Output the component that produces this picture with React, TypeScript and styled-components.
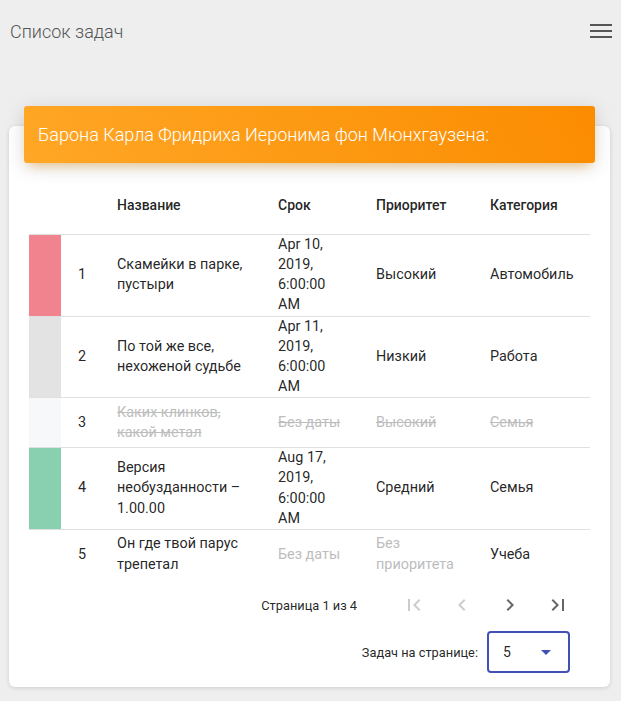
import styled, { createGlobalStyle } from "styled-components";

const GlobalStyle = createGlobalStyle`
  body {
    margin: 0;
    background: #eeeeee;
    font-family: Roboto, "Noto Sans", sans-serif;
    color: rgba(0, 0, 0, 0.87);
  }
`;

type Task = {
  id: number;
  name: string;
  date: string | null;
  priority: string | null;
  category: string;
  color: string;
  done?: boolean;
};

const tasks: Task[] = [
  { id: 1, name: "Скамейки в парке, пустыри", date: "Apr 10, 2019, 6:00:00 AM", priority: "Высокий", category: "Автомобиль", color: "#f0838d" },
  { id: 2, name: "По той же все, нехоженой судьбе", date: "Apr 11, 2019, 6:00:00 AM", priority: "Низкий", category: "Работа", color: "#e3e3e3" },
  { id: 3, name: "Каких клинков, какой метал", date: null, priority: "Высокий", category: "Семья", color: "#f7f8fa", done: true },
  { id: 4, name: "Версия необузданности – 1.00.00", date: "Aug 17, 2019, 6:00:00 AM", priority: "Средний", category: "Семья", color: "#88d0b0" },
  { id: 5, name: "Он где твой парус трепетал", date: null, priority: null, category: "Учеба", color: "transparent" },
];

// column widths and right padding, in px
const cols = [
  { w: 32, pr: 0 },
  { w: 56, pr: 0 },
  { w: 161, pr: 25 },
  { w: 98, pr: 30 },
  { w: 114, pr: 24 },
  { w: 100, pr: 0 },
];

const MenuIcon = () => (
  <svg width="22" height="14" viewBox="0 0 22 14">
    <path d="M0 0h22v2H0zM0 6h22v2H0zM0 12h22v2H0z" fill="#555" />
  </svg>
);

const FirstPage = () => (
  <svg width="24" height="24" viewBox="0 0 24 24">
    <path d="M18.41 16.59L13.82 12l4.59-4.59L17 6l-6 6 6 6zM6 6h2v12H6z" fill="currentColor" />
  </svg>
);
const PrevPage = () => (
  <svg width="24" height="24" viewBox="0 0 24 24">
    <path d="M15.41 16.59L10.83 12l4.58-4.59L14 6l-6 6 6 6 1.41-1.41z" fill="currentColor" />
  </svg>
);
const NextPage = () => (
  <svg width="24" height="24" viewBox="0 0 24 24">
    <path d="M8.59 16.59L13.17 12 8.59 7.41 10 6l6 6-6 6-1.41-1.41z" fill="currentColor" />
  </svg>
);
const LastPage = () => (
  <svg width="24" height="24" viewBox="0 0 24 24">
    <path d="M5.59 7.41L10.18 12l-4.59 4.59L7 18l6-6-6-6zM16 6h2v12h-2z" fill="currentColor" />
  </svg>
);

export default function App() {
  return (
    <>
      <GlobalStyle />
      <TopBar>
        <AppTitle>Список задач</AppTitle>
        <MenuButton>
          <MenuIcon />
        </MenuButton>
      </TopBar>
      <Card>
        <CardHeader>
          <CardTitle>Барона Карла Фридриха Иеронима фон Мюнхгаузена:</CardTitle>
        </CardHeader>
        <CardBody>
          <Table>
            <colgroup>
              {cols.map((c, i) => (
                <col key={i} style={{ width: c.w }} />
              ))}
            </colgroup>
            <thead>
              <tr>
                <HeadCell />
                <HeadCell />
                <HeadCell>Название</HeadCell>
                <HeadCell>Срок</HeadCell>
                <HeadCell>Приоритет</HeadCell>
                <HeadCell>Категория</HeadCell>
              </tr>
            </thead>
            <tbody>
              {tasks.map((t, i) => (
                <Row key={t.id} $last={i === tasks.length - 1}>
                  <Stripe $color={t.color} />
                  <NumCell>{t.id}</NumCell>
                  <Cell $pr={cols[2].pr} $done={t.done}>{t.name}</Cell>
                  <Cell $pr={cols[3].pr} $done={t.done} $muted={!t.date}>
                    {t.date ?? "Без даты"}
                  </Cell>
                  <Cell $pr={cols[4].pr} $done={t.done} $muted={!t.priority}>
                    {t.priority ?? "Без приоритета"}
                  </Cell>
                  <Cell $pr={cols[5].pr} $done={t.done}>{t.category}</Cell>
                </Row>
              ))}
            </tbody>
          </Table>
          <Pagination>
            <PageInfo>Страница 1 из 4</PageInfo>
            <Pager>
              <IconButton $disabled><FirstPage /></IconButton>
              <IconButton $disabled><PrevPage /></IconButton>
              <IconButton><NextPage /></IconButton>
              <IconButton><LastPage /></IconButton>
            </Pager>
          </Pagination>
          <PerPage>
            <PerPageLabel>Задач на странице:</PerPageLabel>
            <Select>
              <span>5</span>
              <svg width="24" height="24" viewBox="0 0 24 24">
                <path d="M7 10l5 5 5-5z" fill="#3f51b5" />
              </svg>
            </Select>
          </PerPage>
        </CardBody>
      </Card>
    </>
  );
}

const TopBar = styled.header`
  display: flex;
  align-items: center;
  justify-content: space-between;
  height: 62px;
  padding: 0 9px 0 10px;
`;

const AppTitle = styled.div`
  font-size: 18px;
  font-weight: 300;
  color: #555;
`;

const MenuButton = styled.div`
  display: flex;
  margin-top: -1px;
`;

const Card = styled.div`
  margin: 64px 11px 13px 9px;
  background: #fff;
  border-radius: 6px;
  box-shadow: 0 1px 4px 0 rgba(0, 0, 0, 0.14);
`;

const CardHeader = styled.div`
  position: relative;
  top: -20px;
  margin: 0 15px -20px;
  padding: 15px 14px;
  border-radius: 3px;
  background: linear-gradient(60deg, #ffa726, #fb8c00);
  box-shadow: 0 4px 20px 0 rgba(0, 0, 0, 0.14),
    0 7px 10px -5px rgba(255, 152, 0, 0.4);
`;

const CardTitle = styled.h4`
  margin: 0;
  font-size: 18px;
  line-height: 27px;
  font-weight: 300;
  color: #fff;
`;

const CardBody = styled.div`
  padding: 15px 20px 14px;
`;

const Table = styled.table`
  width: 561px;
  table-layout: fixed;
  border-collapse: collapse;
  font-size: 14.4px;
  line-height: 1.4;
`;

const HeadCell = styled.th`
  height: 56px;
  padding: 0;
  text-align: left;
  font-size: 14px;
  font-weight: 500;
  color: rgba(0, 0, 0, 0.87);
  border-bottom: 1px solid #e0e0e0;
`;

const Row = styled.tr<{ $last?: boolean }>`
  height: 50px;
  border-bottom: ${(p) => (p.$last ? "none" : "1px solid #e0e0e0")};
`;

const Stripe = styled.td<{ $color: string }>`
  padding: 0;
  background: ${(p) => p.$color};
`;

const NumCell = styled.td`
  padding: 0 0 0 17px;
  vertical-align: middle;
`;

const Cell = styled.td<{ $pr: number; $done?: boolean; $muted?: boolean }>`
  padding: 0 ${(p) => p.$pr}px 0 0;
  vertical-align: middle;
  color: ${(p) => (p.$done || p.$muted ? "#bdbdbd" : "rgba(0, 0, 0, 0.87)")};
  text-decoration: ${(p) => (p.$done ? "line-through" : "none")};
`;

const Pagination = styled.div`
  display: flex;
  align-items: center;
  justify-content: flex-end;
  height: 52px;
  padding-right: 8px;
`;

const PageInfo = styled.div`
  margin-right: 33px;
  font-size: 12.8px;
  color: rgba(0, 0, 0, 0.87);
`;

const Pager = styled.div`
  display: flex;
`;

const IconButton = styled.div<{ $disabled?: boolean }>`
  display: flex;
  align-items: center;
  justify-content: center;
  width: 48px;
  height: 48px;
  color: ${(p) => (p.$disabled ? "rgba(0, 0, 0, 0.2)" : "rgba(0, 0, 0, 0.6)")};
`;

const PerPage = styled.div`
  display: flex;
  align-items: center;
  justify-content: flex-end;
  gap: 9px;
  padding-right: 20px;
`;

const PerPageLabel = styled.div`
  font-size: 12.8px;
  color: rgba(0, 0, 0, 0.87);
`;

const Select = styled.div`
  box-sizing: border-box;
  display: flex;
  align-items: center;
  justify-content: space-between;
  width: 83px;
  height: 42px;
  padding: 0 10px 0 14px;
  border: 2px solid #3f51b5;
  border-radius: 4px;
  font-size: 14px;
`;
